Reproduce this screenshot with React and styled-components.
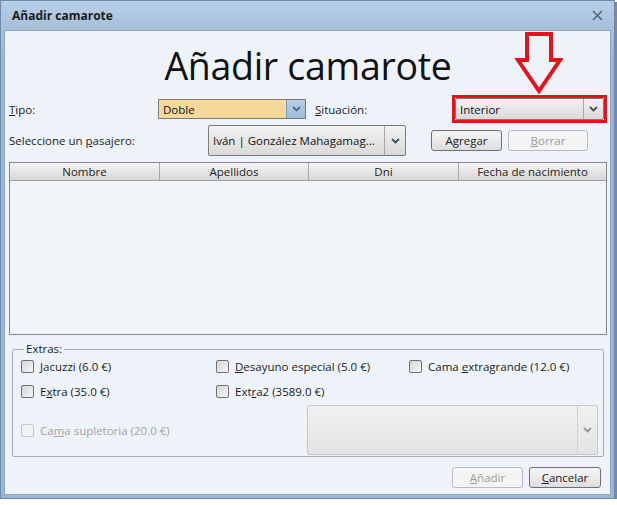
import React from "react";
import styled, { createGlobalStyle } from "styled-components";

const Global = createGlobalStyle`
  html, body { margin: 0; padding: 0; background: #ffffff; }
  body { font-family: "Open Sans", "Noto Sans", sans-serif; font-size: 11.5px; color: #1b1b1b; }
  * { box-sizing: border-box; }
`;

const Window = styled.div`
  width: 615px;
  height: 499px;
  border: 1px solid #6d8aa8;
  background: linear-gradient(#b3cbe3, #9cb7d3 60px, #9cb7d3);
  padding: 0 3px 3px 3px;
  display: flex;
  flex-direction: column;
  box-shadow: 2px 2px 0 #7d8a96;
`;

const TitleBar = styled.div`
  height: 29px;
  display: flex;
  align-items: center;
  justify-content: space-between;
  padding: 0 8px 0 8px;
  background: linear-gradient(#b9d0e7, #a5bfda);
`;

const TitleText = styled.span`
  font-weight: 700;
  font-size: 12px;
  color: #1c1c1c;
`;

const Client = styled.div`
  position: relative;
  flex: 1;
  background: #eef3f9;
  border: 1px solid #8ea7c0;
  padding: 0 3px 0 4px;
  display: flex;
  flex-direction: column;
`;

const Heading = styled.h1`
  margin: 0;
  height: 64px;
  display: flex;
  align-items: center;
  justify-content: center;
  font-weight: 400;
  font-size: 37.5px;
  color: #111;
  letter-spacing: -0.3px;
  padding-top: 4px;
`;

const Row = styled.div`
  display: flex;
  align-items: center;
  height: ${(p) => p.$h}px;
  margin-top: ${(p) => p.$mt || 0}px;
`;

const Label = styled.span`
  width: ${(p) => (p.$w ? `${p.$w}px` : "auto")};
  margin-left: ${(p) => p.$ml || 0}px;
  flex-shrink: 0;
  font-size: 11.5px;
  color: ${(p) => (p.$disabled ? "#a3a3a3" : "#1b1b1b")};
`;

const U = styled.span`
  text-decoration: underline;
`;

const Combo = styled.div`
  width: ${(p) => p.$w}px;
  height: ${(p) => p.$h}px;
  margin-left: ${(p) => (p.$auto ? "auto" : `${p.$ml || 0}px`)};
  display: flex;
  border: 1px solid ${(p) => (p.$disabled ? "#c5c9cd" : "#7a7a7a")};
  background: ${(p) =>
    p.$yellow
      ? "#f8d99c"
      : p.$disabled
      ? "linear-gradient(#f1f1f1, #e3e3e3)"
      : "linear-gradient(#f2f2f2, #e6e6e6 50%, #d9d9d9)"};
  border-radius: ${(p) => (p.$yellow ? 0 : 2)}px;
  flex-shrink: 0;
`;

const ComboText = styled.div`
  flex: 1;
  display: flex;
  align-items: center;
  padding-left: 4px;
  font-size: 11.5px;
  color: #111;
  white-space: nowrap;
  overflow: hidden;
`;

const DropBtn = styled.div`
  width: ${(p) => p.$w || 19}px;
  display: flex;
  align-items: center;
  justify-content: center;
  border-left: 1px solid ${(p) => (p.$blue ? "#7f9db9" : p.$disabled ? "#d0d3d6" : "#a8a8a8")};
  background: ${(p) => (p.$blue ? "linear-gradient(#b7cfe6, #9fbcd8)" : "transparent")};
`;

const RedFrame = styled.div`
  margin-left: auto;
  border: 3px solid #e5121b;
  display: flex;
`;

const Button = styled.button`
  width: ${(p) => p.$w}px;
  height: 21px;
  margin-left: ${(p) => p.$ml || 0}px;
  border: 1px solid ${(p) => (p.disabled ? "#b8bcc0" : "#707070")};
  border-radius: 3px;
  background: ${(p) =>
    p.disabled ? "#f4f4f4" : "linear-gradient(#f4f4f4, #ebebeb 50%, #dcdcdc)"};
  color: ${(p) => (p.disabled ? "#9c9c9c" : "#1b1b1b")};
  font-family: inherit;
  font-size: 11.5px;
  padding: 0;
  flex-shrink: 0;
`;

const Table = styled.div`
  margin-top: 6px;
  height: 173px;
  border: 1px solid #828790;
  background: #f0f4f9;
  display: flex;
  flex-direction: column;
`;

const HeaderRow = styled.div`
  display: grid;
  grid-template-columns: 150px 149px 150px 1fr;
  height: 18px;
  background: linear-gradient(#f5f5f5, #e6e6e6 50%, #d6d6d6);
  border-bottom: 1px solid #a0a0a0;
`;

const HeaderCell = styled.div`
  display: flex;
  align-items: center;
  justify-content: center;
  font-size: 11.5px;
  color: #222;
  border-right: 1px solid #a9a9a9;
  &:last-child { border-right: none; }
`;

const Group = styled.fieldset`
  margin: 7px 3px 0 3px;
  padding: 0 5px 1px 8px;
  border: 1px solid #a6adb4;
  border-radius: 2px;
  height: 115px;
  min-width: 0;
`;

const Legend = styled.legend`
  padding: 0 2px;
  margin-left: 3px;
  font-size: 11.5px;
  line-height: 14px;
  color: #1b1b1b;
`;

const CheckGrid = styled.div`
  display: grid;
  grid-template-columns: 195px 193px 1fr;
  grid-auto-rows: 20px;
  row-gap: 5px;
`;

const CheckItem = styled.label`
  display: flex;
  align-items: center;
  gap: 6px;
  font-size: 11.5px;
  color: ${(p) => (p.$disabled ? "#a3a3a3" : "#1b1b1b")};
`;

const Box = styled.span`
  width: 13px;
  height: 13px;
  border: 1px solid ${(p) => (p.$disabled ? "#c3c6c9" : "#707070")};
  border-radius: 2px;
  background: ${(p) =>
    p.$disabled ? "#f2f2f2" : "linear-gradient(135deg, #d6d6d6, #f6f6f6)"};
  flex-shrink: 0;
`;

const LastRow = styled.div`
  display: flex;
  align-items: center;
  margin-top: 4px;
`;

const Footer = styled.div`
  display: flex;
  justify-content: flex-end;
  gap: 6px;
  margin-top: 10px;
  padding-right: 6px;
`;

const ArrowLayer = styled.svg`
  position: absolute;
  left: 508px;
  top: 0px;
  pointer-events: none;
`;

const Chevron = ({ color = "#3d4f63" }) => (
  <svg width="9" height="6" viewBox="0 0 9 6">
    <path d="M1 1 L4.5 4.5 L8 1" fill="none" stroke={color} strokeWidth="1.8" />
  </svg>
);

const Close = () => (
  <svg width="11" height="11" viewBox="0 0 11 11">
    <path d="M1 1 L10 10 M10 1 L1 10" stroke="#56677a" strokeWidth="1.6" />
  </svg>
);

export default function App() {
  return (
    <>
      <Global />
      <Window>
        <TitleBar>
          <TitleText>Añadir camarote</TitleText>
          <Close />
        </TitleBar>
        <Client>
          <ArrowLayer width="50" height="64" viewBox="0 0 50 64">
            <path
              d="M14 3 L38 3 L38 29 L47 29 L26 60 L5 29 L14 29 Z"
              fill="none"
              stroke="#e5121b"
              strokeWidth="4"
              strokeLinejoin="miter"
            />
          </ArrowLayer>
          <Heading>Añadir camarote</Heading>
          <Row $h={28}>
            <Label $w={149}>
              <U>T</U>ipo:
            </Label>
            <Combo $w={148} $h={20} $yellow>
              <ComboText>Doble</ComboText>
              <DropBtn $blue>
                <Chevron color="#4a6a8a" />
              </DropBtn>
            </Combo>
            <Label $ml={9}>
              <U>S</U>ituación:
            </Label>
            <RedFrame>
              <Combo $w={149} $h={22}>
                <ComboText>Interior</ComboText>
                <DropBtn $w={20}>
                  <Chevron />
                </DropBtn>
              </Combo>
            </RedFrame>
          </Row>
          <Row $h={31} $mt={2}>
            <Label $w={199}>
              Seleccione un <U>p</U>asajero:
            </Label>
            <Combo $w={198} $h={31}>
              <ComboText>Iván | González Mahagamag...</ComboText>
              <DropBtn $w={21}>
                <Chevron />
              </DropBtn>
            </Combo>
            <Button $w={71} $ml={25}>
              A<U>g</U>regar
            </Button>
            <Button $w={80} $ml={6} disabled>
              <U>B</U>orrar
            </Button>
          </Row>
          <Table>
            <HeaderRow>
              <HeaderCell>Nombre</HeaderCell>
              <HeaderCell>Apellidos</HeaderCell>
              <HeaderCell>Dni</HeaderCell>
              <HeaderCell>Fecha de nacimiento</HeaderCell>
            </HeaderRow>
          </Table>
          <Group>
            <Legend>Extras:</Legend>
            <CheckGrid>
              <CheckItem>
                <Box />
                <span>
                  <U>J</U>acuzzi (6.0 €)
                </span>
              </CheckItem>
              <CheckItem>
                <Box />
                <span>
                  <U>D</U>esayuno especial (5.0 €)
                </span>
              </CheckItem>
              <CheckItem>
                <Box />
                <span>
                  Cama <U>e</U>xtragrande (12.0 €)
                </span>
              </CheckItem>
              <CheckItem>
                <Box />
                <span>
                  E<U>x</U>tra (35.0 €)
                </span>
              </CheckItem>
              <CheckItem>
                <Box />
                <span>
                  Ext<U>r</U>a2 (3589.0 €)
                </span>
              </CheckItem>
            </CheckGrid>
            <LastRow>
              <CheckItem $disabled>
                <Box $disabled />
                <span>
                  Ca<U>m</U>a supletoria (20.0 €)
                </span>
              </CheckItem>
              <Combo $w={291} $h={50} $auto $disabled>
                <ComboText />
                <DropBtn $w={20} $disabled>
                  <Chevron color="#8c959e" />
                </DropBtn>
              </Combo>
            </LastRow>
          </Group>
          <Footer>
            <Button $w={71} disabled>
              <U>A</U>ñadir
            </Button>
            <Button $w={72}>
              <U>C</U>ancelar
            </Button>
          </Footer>
        </Client>
      </Window>
    </>
  );
}
